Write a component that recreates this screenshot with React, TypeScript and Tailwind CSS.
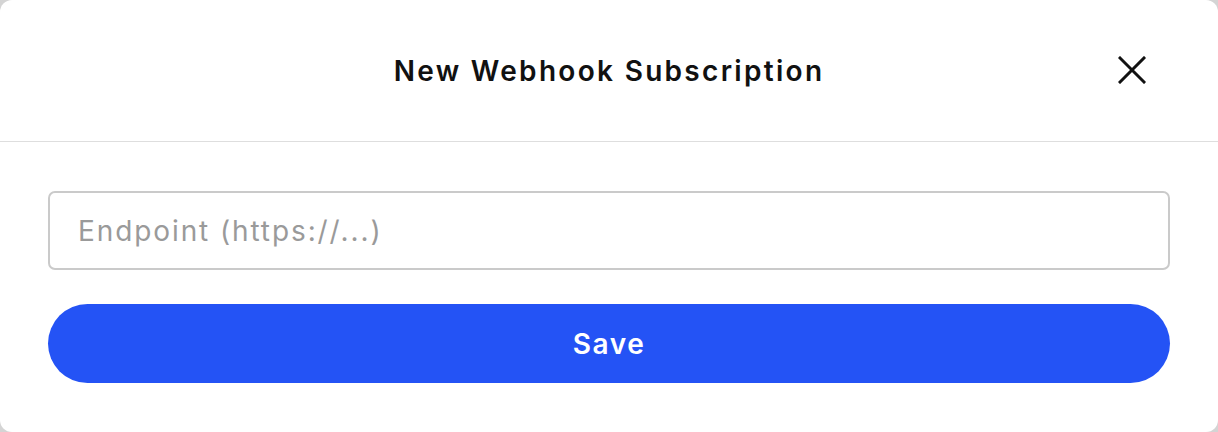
export default function App() {
  return (
    <div className="h-[432px] w-[1218px] bg-[#d4d4d4] font-['Inter',sans-serif]">
      <div className="flex h-full w-full flex-col rounded-[12px] bg-white">
        {/* Header */}
        <div className="relative flex h-[142px] items-center justify-center border-b border-[#dedede]">
          <h2 className="text-[28px] font-semibold tracking-[2.3px] text-[#111]">
            New Webhook Subscription
          </h2>
          <button className="absolute right-[72px] top-[56px] text-[#111]" aria-label="Close">
            <svg width="28" height="28" viewBox="0 0 28 28" fill="none">
              <path d="M2 2L26 26M26 2L2 26" stroke="currentColor" strokeWidth="3" strokeLinecap="square" />
            </svg>
          </button>
        </div>

        {/* Body */}
        <div className="flex flex-col gap-[34px] px-[48px] pt-[49px]">
          <input
            type="text"
            placeholder="Endpoint (https://...)"
            className="h-[79px] w-full rounded-[7px] border-2 border-[#cacaca] px-[28px] text-[28px] tracking-[1.9px] text-[#111] outline-none placeholder:text-[#9a9a9a]"
          />
          <button className="h-[79px] w-full rounded-full bg-[#2453f5] text-[28px] font-semibold tracking-[1.6px] text-white">
            Save
          </button>
        </div>
      </div>
    </div>
  );
}
